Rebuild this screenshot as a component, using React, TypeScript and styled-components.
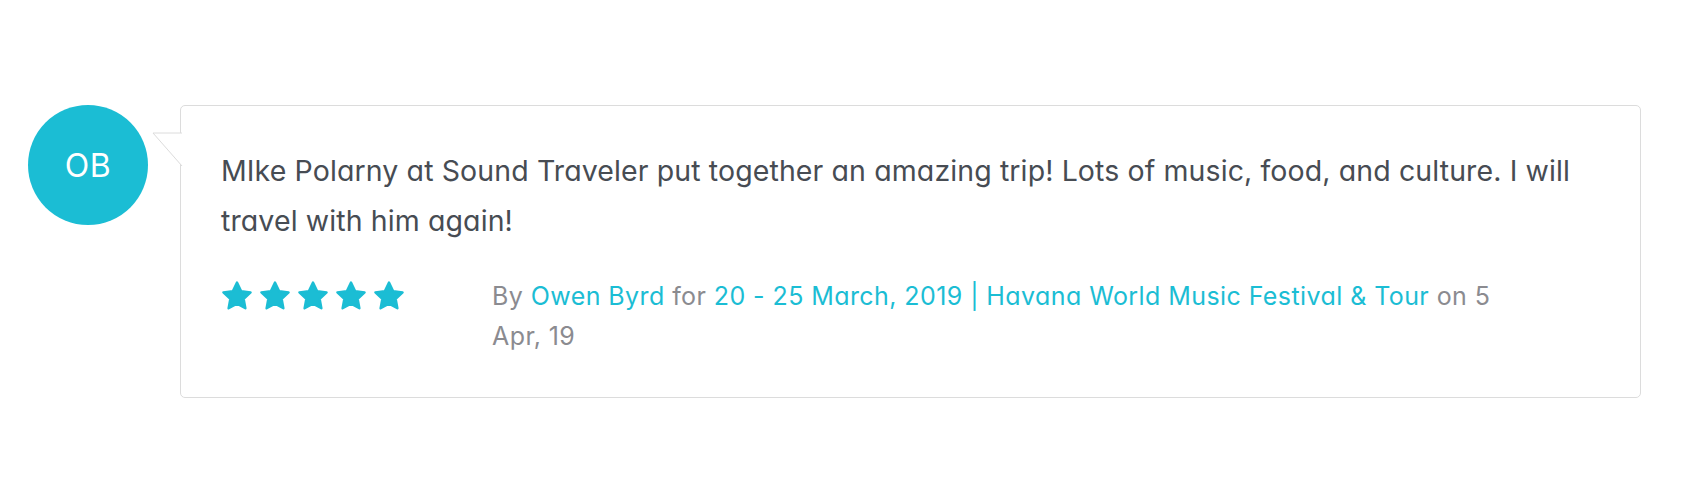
import React from "react";
import styled, { createGlobalStyle } from "styled-components";

const Global = createGlobalStyle`
  html, body { margin: 0; padding: 0; background: #ffffff; }
  body { font-family: Inter, "Open Sans", sans-serif; }
`;

const Page = styled.div`
  padding: 105px 59px 0 28px;
`;

const Review = styled.div`
  display: flex;
  align-items: flex-start;
  gap: 32px;
`;

const Avatar = styled.div`
  flex: 0 0 120px;
  width: 120px;
  height: 120px;
  border-radius: 50%;
  background: #1bbdd4;
  color: #ffffff;
  display: flex;
  align-items: center;
  justify-content: center;
  font-family: Inter, sans-serif;
  font-size: 32px;
  font-weight: 400;
  letter-spacing: 0.5px;
`;

const Card = styled.div`
  position: relative;
  flex: 1;
  border: 1px solid #dcdcdc;
  border-radius: 5px;
  background: #fff;
  padding: 40px 40px 41px 40px;
`;

const Tail = styled.svg`
  position: absolute;
  left: -29px;
  top: 26px;
  width: 30px;
  height: 34px;
  overflow: visible;
`;

const Body = styled.p`
  margin: 0;
  font-family: Inter, sans-serif;
  font-feature-settings: "cv11" 1;
  font-size: 28.5px;
  line-height: 50px;
  color: #474c53;
  letter-spacing: 0.11px;
`;

const Footer = styled.div`
  display: grid;
  grid-template-columns: 271px 1fr;
  margin-top: 30px;
  padding-right: 75px;
`;

const Stars = styled.div`
  display: flex;
  gap: 6px;
  padding-top: 4px;
`;

const Meta = styled.div`
  font-family: Inter, sans-serif;
  font-feature-settings: "cv11" 1;
  font-size: 25px;
  line-height: 40px;
  letter-spacing: 0.42px;
  color: #8b8b90;
`;

const Link = styled.a`
  color: #1bbdd4;
  text-decoration: none;
`;

const Star = () => (
  <svg width="32" height="32" viewBox="0 0 32 32">
    <polygon
      points="16,2.5 20.2,11.2 29.6,12.4 22.7,18.9 24.4,28.3 16,23.7 7.6,28.3 9.3,18.9 2.4,12.4 11.8,11.2"
      fill="#1bbdd4"
      stroke="#1bbdd4"
      strokeWidth="2.4"
      strokeLinejoin="round"
    />
  </svg>
);

export default function App() {
  return (
    <>
      <Global />
      <Page>
        <Review>
          <Avatar>OB</Avatar>
          <Card>
            <Tail viewBox="0 0 30 34">
              <polygon points="1,1 30,1 30,34" fill="#fff" />
              <polyline points="30,1 1,1 30,34" fill="none" stroke="#dcdcdc" strokeWidth="1" />
            </Tail>
            <Body>
              MIke Polarny at Sound Traveler put together an amazing trip! Lots of music, food, and culture. I will travel with him again!
            </Body>
            <Footer>
              <Stars>
                {[0, 1, 2, 3, 4].map((i) => (
                  <Star key={i} />
                ))}
              </Stars>
              <Meta>
                By <Link href="#">Owen Byrd</Link> for{" "}
                <Link href="#">20 - 25 March, 2019 | Havana World Music Festival &amp; Tour</Link> on 5 Apr, 19
              </Meta>
            </Footer>
          </Card>
        </Review>
      </Page>
    </>
  );
}
